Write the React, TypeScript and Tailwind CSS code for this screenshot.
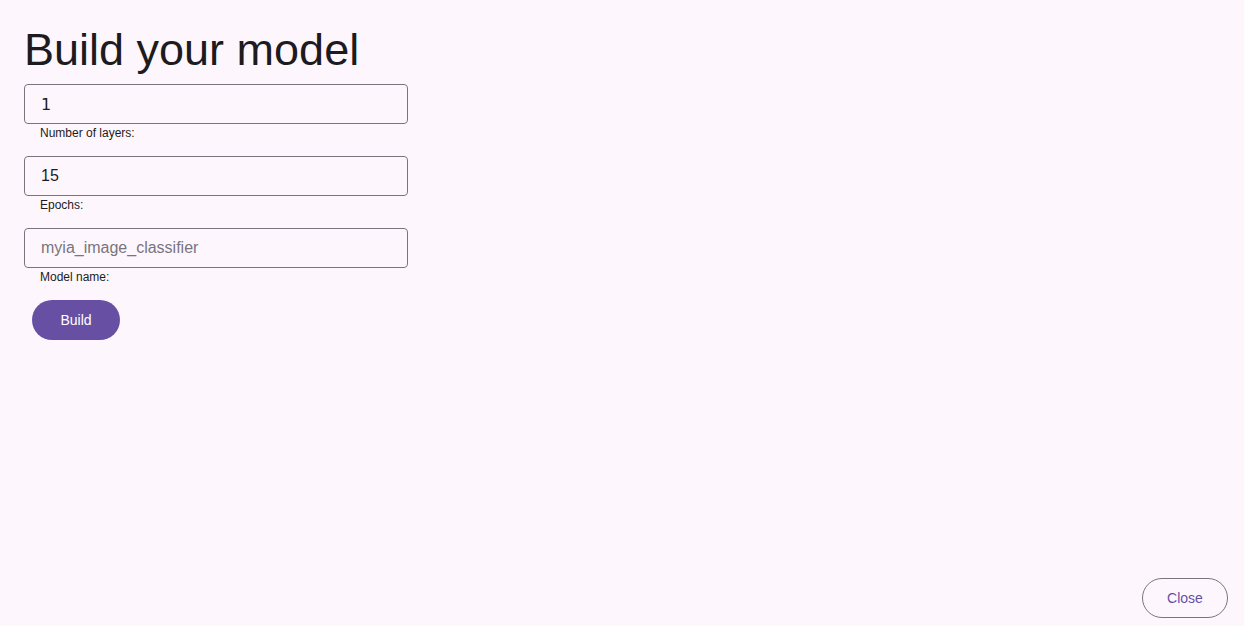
import React from "react";

function Field({ value, placeholder, label, alt }: { value?: string; placeholder?: string; label: string; alt?: boolean }) {
  return (
    <div className="flex flex-col">
      <input
        readOnly
        value={value}
        placeholder={placeholder}
        className={`h-10 w-[384px] rounded-[4px] border border-[#79747e] bg-transparent px-4 text-base text-[#1d1b20] outline-none placeholder:text-[#79747e] ${alt ? "font-['DejaVu_Sans',sans-serif]" : ""}`}
      />
      <span className="px-4 text-xs leading-[18px] text-[#1d1b20]">{label}</span>
    </div>
  );
}

export default function App() {
  return (
    <div className="relative h-[626px] w-full overflow-hidden bg-[#fdf7fd] font-['Liberation_Sans',Arial,sans-serif]">
      <div className="flex flex-col p-6">
        <h1 className="text-[45px] leading-[52px] text-[#1d1b20]">Build your model</h1>
        <div className="mt-2 flex flex-col gap-[14px]">
          <Field value="1" label="Number of layers:" alt />
          <Field value="15" label="Epochs:" />
          <Field placeholder="myia_image_classifier" label="Model name:" />
        </div>
        <div className="mt-[14px] px-2">
          <button className="h-10 w-[88px] rounded-full bg-[#6750a4] text-sm text-white">Build</button>
        </div>
      </div>
      <button className="absolute bottom-2 right-4 h-10 w-[86px] rounded-full border border-[#79747e] text-sm text-[#6750a4]">
        Close
      </button>
    </div>
  );
}
